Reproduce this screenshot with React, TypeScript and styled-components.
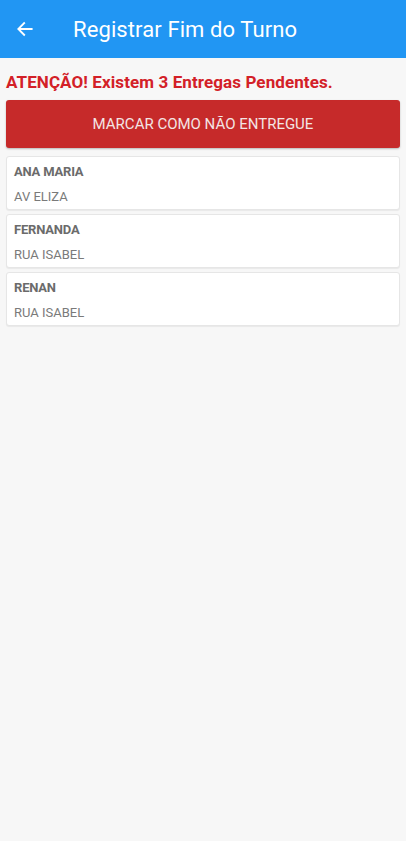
import styled, { createGlobalStyle } from 'styled-components';

const GlobalStyle = createGlobalStyle`
  html, body {
    margin: 0;
    padding: 0;
    background: #f7f7f7;
    font-family: Roboto, "Liberation Sans", sans-serif;
  }
`;

const Page = styled.div`
  min-height: 841px;
  background: #f7f7f7;
  display: flex;
  flex-direction: column;
`;

const Header = styled.header`
  height: 58px;
  background: #2196f3;
  display: flex;
  align-items: center;
  padding-left: 15px;
  box-sizing: border-box;
`;

const BackButton = styled.button`
  width: 20px;
  height: 20px;
  padding: 0;
  border: none;
  background: transparent;
  display: flex;
  align-items: center;
  justify-content: center;
  cursor: pointer;
`;

const Title = styled.h1`
  margin: 0 0 0 38px;
  font-size: 22px;
  font-weight: 400;
  color: #ffffff;
  letter-spacing: 0.1px;
`;

const Content = styled.main`
  padding: 14px 6px 0;
  display: flex;
  flex-direction: column;
`;

const Warning = styled.p`
  margin: 0 0 8px;
  font-size: 17px;
  font-weight: 700;
  color: #d32027;
  letter-spacing: 0.1px;
  line-height: 20px;
`;

const ActionButton = styled.button`
  height: 48px;
  border: none;
  border-radius: 3px;
  background: #c62a2a;
  color: #f3e4e4;
  font-family: inherit;
  font-size: 15px;
  font-weight: 400;
  text-transform: uppercase;
  box-shadow: 0 1px 2px rgba(0, 0, 0, 0.25);
  cursor: pointer;
  margin-bottom: 8px;
`;

const List = styled.ul`
  list-style: none;
  margin: 0;
  padding: 0;
  display: flex;
  flex-direction: column;
  gap: 4px;
`;

const Card = styled.li`
  height: 54px;
  box-sizing: border-box;
  background: #ffffff;
  border: 1px solid #e6e6e6;
  border-radius: 3px;
  box-shadow: 0 1px 1px rgba(0, 0, 0, 0.06);
  padding: 7px 7px 0;
  display: flex;
  flex-direction: column;
  gap: 9px;
`;

const Name = styled.span`
  font-size: 13px;
  font-weight: 700;
  color: #6b6b6b;
  line-height: 16px;
  letter-spacing: -0.2px;
`;

const Address = styled.span`
  font-size: 13px;
  color: #7a7a7a;
  line-height: 16px;
`;

const deliveries = [
  { name: 'ANA MARIA', address: 'AV ELIZA' },
  { name: 'FERNANDA', address: 'RUA ISABEL' },
  { name: 'RENAN', address: 'RUA ISABEL' },
];

export default function App() {
  return (
    <>
      <GlobalStyle />
      <Page>
        <Header>
          <BackButton aria-label="Voltar">
            <svg width="20" height="20" viewBox="0 0 24 24" fill="none">
              <path
                d="M20 12H4.5M11 5l-7 7 7 7"
                stroke="#ffffff"
                strokeWidth="2.2"
                strokeLinecap="square"
              />
            </svg>
          </BackButton>
          <Title>Registrar Fim do Turno</Title>
        </Header>
        <Content>
          <Warning>ATENÇÃO! Existem 3 Entregas Pendentes.</Warning>
          <ActionButton>Marcar como não entregue</ActionButton>
          <List>
            {deliveries.map((d) => (
              <Card key={d.name}>
                <Name>{d.name}</Name>
                <Address>{d.address}</Address>
              </Card>
            ))}
          </List>
        </Content>
      </Page>
    </>
  );
}
